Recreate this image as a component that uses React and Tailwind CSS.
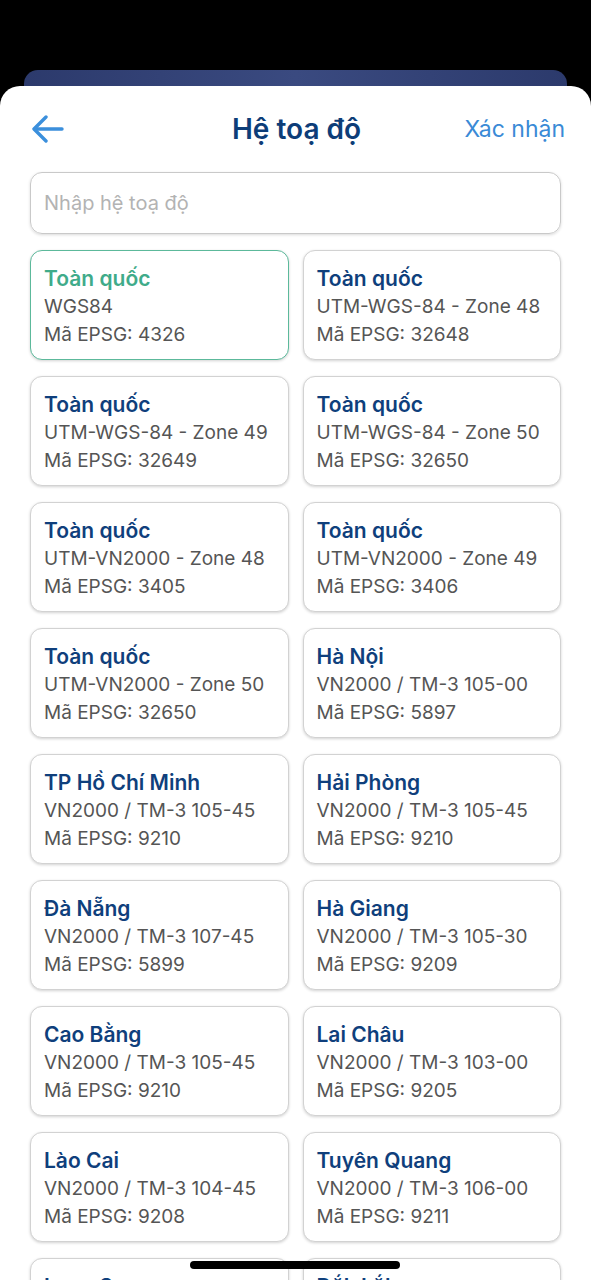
const items = [
  { title: 'Toàn quốc', name: 'WGS84', code: '4326', selected: true },
  { title: 'Toàn quốc', name: 'UTM-WGS-84 - Zone 48', code: '32648' },
  { title: 'Toàn quốc', name: 'UTM-WGS-84 - Zone 49', code: '32649' },
  { title: 'Toàn quốc', name: 'UTM-WGS-84 - Zone 50', code: '32650' },
  { title: 'Toàn quốc', name: 'UTM-VN2000 - Zone 48', code: '3405' },
  { title: 'Toàn quốc', name: 'UTM-VN2000 - Zone 49', code: '3406' },
  { title: 'Toàn quốc', name: 'UTM-VN2000 - Zone 50', code: '32650' },
  { title: 'Hà Nội', name: 'VN2000 / TM-3 105-00', code: '5897' },
  { title: 'TP Hồ Chí Minh', name: 'VN2000 / TM-3 105-45', code: '9210' },
  { title: 'Hải Phòng', name: 'VN2000 / TM-3 105-45', code: '9210' },
  { title: 'Đà Nẵng', name: 'VN2000 / TM-3 107-45', code: '5899' },
  { title: 'Hà Giang', name: 'VN2000 / TM-3 105-30', code: '9209' },
  { title: 'Cao Bằng', name: 'VN2000 / TM-3 105-45', code: '9210' },
  { title: 'Lai Châu', name: 'VN2000 / TM-3 103-00', code: '9205' },
  { title: 'Lào Cai', name: 'VN2000 / TM-3 104-45', code: '9208' },
  { title: 'Tuyên Quang', name: 'VN2000 / TM-3 106-00', code: '9211' },
  { title: 'Lạng Sơn', name: 'VN2000 / TM-3 107-15', code: '9212' },
  { title: 'Đắk Lắk', name: 'VN2000 / TM-3 108-30', code: '9213' },
]

function Card({ item }) {
  return (
    <div
      className={`h-[110px] rounded-[12px] bg-white pl-[13px] pt-[14px] shadow-[0_1px_3px_rgba(0,0,0,0.18)] border ${
        item.selected ? 'border-[#5cb99b]' : 'border-[#d2d2d2]'
      }`}
    >
      <div className={`text-[21px] leading-[28px] font-semibold ${item.selected ? 'text-[#3fab8a]' : 'text-[#0f3f7c]'}`}>
        {item.title}
      </div>
      <div className="text-[19px] leading-[28px] text-[#555]">{item.name}</div>
      <div className="text-[19px] leading-[28px] text-[#555]">Mã EPSG: {item.code}</div>
    </div>
  )
}

export default function App() {
  return (
    <div className="relative h-[1280px] overflow-hidden bg-black font-['Inter',sans-serif]">
      <div className="pt-[70px]">
        <div className="mx-[24px] h-[16px] rounded-t-[14px] bg-gradient-to-r from-[#2c3a6c] via-[#3a4a80] to-[#2c3a6c]" />
        <div className="rounded-t-[20px] bg-white pb-10">
          <div className="grid h-[86px] grid-cols-[1fr_auto_1fr] items-center pl-[32px] pr-[26px]">
            <svg width="32" height="28" viewBox="0 0 32 28" fill="none" stroke="#3b8fdc" strokeWidth="3.4" strokeLinecap="round" strokeLinejoin="round">
              <path d="M30 14H3" />
              <path d="M14 2L2 14l12 12" />
            </svg>
            <div className="mr-[4px] text-[28px] font-semibold text-[#0d3d78]">Hệ toạ độ</div>
            <div className="justify-self-end text-[23px] text-[#3a8ad6]">Xác nhận</div>
          </div>
          <div className="mx-[30px] flex h-[62px] items-center rounded-[12px] border border-[#c9c9c9] px-[13px] shadow-[0_1px_3px_rgba(0,0,0,0.15)]">
            <span className="text-[20px] text-[#b3b3b3]">Nhập hệ toạ độ</span>
          </div>
          <div className="mt-[16px] grid grid-cols-2 gap-x-[14px] gap-y-[16px] px-[30px]">
            {items.map((item, i) => (
              <Card key={i} item={item} />
            ))}
          </div>
        </div>
      </div>
      <div className="absolute bottom-[11px] left-[190px] h-[8px] w-[210px] rounded-full bg-black" />
    </div>
  )
}
